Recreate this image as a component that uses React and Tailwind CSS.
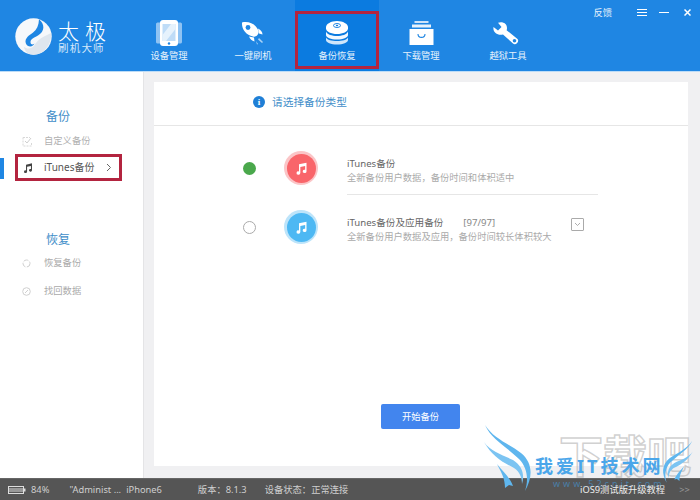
import React from "react";

const Phone = () => (
  <svg width="28" height="26" viewBox="0 0 28 26">
    <path d="M1 4c0-1 1-1.500 2-1.500h3v21H3c-1 0-2-.5-2-1.500z" fill="#8fc3f3" />
    <path d="M27 4c0-1-1-1.500-2-1.500h-3v21h3c1 0 2-.5 2-1.500z" fill="#8fc3f3" />
    <rect x="5" y="0" width="18" height="26" rx="3" fill="#fff" />
    <path d="M7.500 4h13v17h-13z" fill="#bfdcf7" />
    <path d="M16 4h4.500v5L11 21H7.500v-6z" fill="#e6f2fc" />
    <circle cx="14" cy="23.500" r="1.200" fill="#1f86e3" />
  </svg>
);
const Rocket = () => (
  <svg width="24" height="24" viewBox="0 0 24 24">
    <path d="M1 1.500C8 0 15 3 17.500 10c.5 2-.5 3.500-1.500 4.500s-2.500 1.500-4 1C5 14 .5 8 1 1.500z" fill="#fff" />
    <circle cx="7" cy="6.500" r="2.400" fill="#1f86e3" />
    <path d="M17 7.500c3 1.500 4.500 3.500 4.500 6l-3.500-1zM8 15.500c1 2.500 3 4.500 5.500 5l-.5-4z" fill="#fff" />
    <path d="M18 17l4 4-1 1-4-3.500zM15 20l2 3-1 .5z" fill="#a9d2f6" />
  </svg>
);
const Disks = () => (
  <svg width="24" height="24" viewBox="0 0 24 24">
    <path d="M1 6v1.500C1 10.500 6 13 12 13s11-2.500 11-5.500V6c0-3-5-6-11-6S1 3 1 6z" fill="#fff" />
    <ellipse cx="12" cy="4.500" rx="3.500" ry="2" fill="none" stroke="#0b7be0" strokeWidth=".9" />
    <ellipse cx="12" cy="4.500" rx="1.200" ry=".7" fill="#0b7be0" />
    <path d="M1 10.500c1 3 6 4.500 11 4.500s10-1.500 11-4.500v3.500c0 2.500-5 4.500-11 4.500S1 16.500 1 14z" fill="#f2f8fe" />
    <path d="M1 16.500c1 2.500 6 3.500 11 3.500s10-1 11-3.500V19c0 2.500-5 4.500-11 4.500S1 21.500 1 19z" fill="#cfe6fb" />
  </svg>
);
const Bag = () => (
  <svg width="25" height="24" viewBox="0 0 25 24">
    <rect x="5.500" y="0" width="14" height="2" fill="#cfe4f9" />
    <rect x="3" y="3.500" width="19" height="3" fill="#e7f2fc" />
    <path d="M.5 8h24v16H.5z" fill="#fff" />
    <path d="M9 13c0 4.500 7 4.500 7 0" fill="none" stroke="#1f86e3" strokeWidth="1.100" />
  </svg>
);
const Wrench = () => (
  <svg width="26" height="23" viewBox="0 0 26 23" className="mr-[4px]">
    <path d="M.5 5l4.500 3.500L8.500 5 5 .8C9.500-.8 14 1.500 14 6c0 .8-.1 1.500-.4 2.200L24.500 17c2.300 2.500-1.800 6.800-4.500 4.500L10 12.500C5 14 -.5 10.500.5 5z" fill="#fff" />
    <circle cx="21.500" cy="18.800" r="1.800" fill="#1f86e3" />
  </svg>
);

const NavItem = ({ label, icon, active, className = "" }) => (
  <div className={`relative w-[84px] h-[71px] flex flex-col items-center pt-[19px] ${active ? "bg-[#0b7be0]" : ""} ${className}`}>
    <div className="h-[28px] flex items-center justify-center">{icon}</div>
    <span className="text-[9.3px] leading-[12px] mt-[3px] text-[#e4f1fc]">{label}</span>
    {active && <div className="absolute left-0 right-0 top-[11px] bottom-[2px] border-[3px] border-[#b3243f]" />}
  </div>
);

const Note = ({ size = 18, color = "#fff" }) => (
  <svg width={size} height={size} viewBox="0 0 18 18">
    <path d="M6 4l9-2v10.500a2.300 2 0 1 1-1.600-1.900V6L7.600 7.300v7.200a2.300 2 0 1 1-1.600-1.900z" fill={color} />
  </svg>
);

const Radio = ({ on }) =>
  on ? (
    <div className="w-[13px] h-[13px] rounded-full bg-[#4aa84c]" />
  ) : (
    <div className="w-[13px] h-[13px] rounded-full border border-[#aaa] bg-white" />
  );

const Disc = ({ bg, ring }) => (
  <div className={`w-[34px] h-[34px] rounded-full flex items-center justify-center ${ring}`}>
    <div className={`w-[29px] h-[29px] rounded-full flex items-center justify-center ${bg}`}>
      <Note size={15} />
    </div>
  </div>
);

const Wing = ({ flip, w = 58, h = 72 }) => (
  <svg width={w} height={h} viewBox="0 0 58 72" className={flip ? "-scale-x-100" : ""}>
    <path d="M2 1c6 14 22 22 34 34 8 8 10 20 6 32 8-14 8-28-4-38C26 20 10 14 2 1z" fill="#5fb6ee" />
    <path d="M1 18c8 14 18 20 30 26 6 4 8 10 8 16 3-10 0-18-9-24C20 31 8 28 1 18z" fill="#7cc4f2" />
    <path d="M14 40c6 8 12 12 16 22l-4-1-4 3c0-10-4-16-8-24z" fill="#5fb6ee" />
  </svg>
);

export default function App() {
  return (
    <div className="relative w-[700px] h-[500px] overflow-hidden flex flex-col bg-[#f0f0f2] font-['Noto_Sans','Noto_Sans_CJK_SC',sans-serif]">
      <header className="h-[72px] shrink-0 flex bg-[#1f86e3] border-b border-[#bcdcf7] relative">
        <div className="w-[127px] pl-[15px] pt-[18px] flex items-start gap-[6px]">
          <svg width="37" height="37" viewBox="0 0 37 37" className="shrink-0">
            <circle cx="18.500" cy="18.500" r="18.200" fill="#f6f8fb" />
            <path d="M29 18.500c2-1 4-2 7.200-3.500C37 25 30 36.700 18.500 36.700c-5 0-9-3-9.500-8 3 3 7.500 2 10-1 2-3 5-7 10-9.200z" fill="#dfe6ee" />
            <path d="M24 1.200c6 5 6 12 -1 16.300-5 2.500-7.500 3.500-7.500 7 0 2.200 3 2.700 4 .8-1 4-7 4.500-8.700 0-1.500-5 3.500-8 7-10.500 4-3 6-7.500 6.200-13.600z" fill="#1f86e3" />
          </svg>
          <div className="flex flex-col text-white mt-[2px]">
            <span className="text-[21px] leading-[22px] tracking-[6px] font-light whitespace-nowrap">太极</span>
            <span className="text-[10.5px] leading-[12px] mt-[0px] text-[#d5e8fa] tracking-[1.200px] whitespace-nowrap">刷机大师</span>
          </div>
        </div>
        <nav className="flex">
          <NavItem label="设备管理" icon={<Phone />} />
          <NavItem label="一键刷机" icon={<Rocket />} />
          <NavItem label="备份恢复" icon={<Disks />} active />
          <NavItem label="下载管理" icon={<Bag />} />
          <NavItem label="越狱工具" icon={<Wrench />} className="ml-[3px]" />
        </nav>
        <div className="absolute top-[6px] right-[9px] flex items-center h-[13px] text-[#e4f1fc]">
          <span className="text-[9.3px] mr-[25px]">反馈</span>
          <div className="w-[10px] flex flex-col gap-[2px] mr-[12px]">
            <div className="h-px bg-white" /><div className="h-px bg-white" /><div className="h-px bg-white" />
          </div>
          <div className="w-[10px] h-px bg-white mr-[15px]" />
          <svg width="7" height="7" viewBox="0 0 7 7"><path d="M.5.500l6 6M6.500.500l-6 6" stroke="#fff" strokeWidth="1.500" /></svg>
        </div>
      </header>

      <div className="flex flex-1 min-h-0">
        <aside className="w-[144px] shrink-0 bg-white border-r border-[#e4e4e6] relative text-[9.3px]">
          <div className="pl-[46px] pt-[37px] text-[12px] leading-[16px] text-[#3f8ec9]">备份</div>
          <div className="flex items-center h-[14px] mt-[9px] pl-[22px] text-[#b0b0b0]">
            <svg width="11" height="11" viewBox="0 0 11 11" className="mr-[11px]">
              <path d="M1 1.500h7M1 1.500v8.500h8.500V6" fill="none" stroke="#d8d8d8" strokeDasharray="2 1" />
              <path d="M3 5l2 2 4-5" fill="none" stroke="#cfcfcf" />
            </svg>
            自定义备份
          </div>
          <div className="relative flex items-center h-[27px] mt-[6px] ml-[15px] w-[107px] border-[3px] border-[#b3243f] text-[#555]">
            <div className="absolute left-[-18px] top-[1px] w-[4px] h-[21px] bg-[#1f86e3]" />
            <span className="ml-[4px] mr-[10px] flex"><Note size={12} color="#444" /></span>
            <span className="text-[10px]">iTunes备份</span>
            <svg width="6" height="9" viewBox="0 0 6 9" className="ml-[12px]"><path d="M1 1l3.500 3.500L1 8" fill="none" stroke="#666" /></svg>
          </div>
          <div className="pl-[46px] mt-[51px] text-[12px] leading-[16px] text-[#3f8ec9]">恢复</div>
          <div className="flex items-center h-[14px] mt-[8px] pl-[22px] text-[#aaa]">
            <svg width="9" height="9" viewBox="0 0 9 9" className="mr-[13px]"><circle cx="4.500" cy="4.500" r="3.500" fill="none" stroke="#cfcfcf" strokeDasharray="5 1.500" /></svg>
            恢复备份
          </div>
          <div className="flex items-center h-[14px] mt-[14px] pl-[22px] text-[#aaa]">
            <svg width="9" height="9" viewBox="0 0 9 9" className="mr-[13px]"><circle cx="4.500" cy="4.500" r="3.800" fill="none" stroke="#cfcfcf" /><path d="M3 6l3-3" stroke="#cfcfcf" /></svg>
            找回数据
          </div>
        </aside>

        <main className="flex-1 min-w-0 pl-[10px] pr-[12px] pt-[10px] pb-[12px]">
          <div className="h-full bg-white flex flex-col">
            <div className="h-[44px] shrink-0 border-b border-[#e6e6e6] flex items-center pl-[99px] pb-[3px]">
              <div className="w-[12px] h-[12px] rounded-full bg-[#1f7fd6] flex items-center justify-center text-white text-[9px] font-bold font-['Liberation_Serif',serif] leading-none">i</div>
              <span className="ml-[7px] text-[10.7px] leading-[14px] text-[#3f8ec9]">请选择备份类型</span>
            </div>

            <div className="flex items-center h-[34px] mt-[25px] pl-[89px]">
              <Radio on />
              <div className="ml-[28px]"><Disc bg="bg-[#f9656a]" ring="bg-[#fbc5c7]" /></div>
              <div className="ml-[29px] pt-[5px] leading-[12px] text-[9.3px]">
                <div className="text-[#666] text-[9.6px]">iTunes备份</div>
                <div className="text-[#aaa] mt-[2px]">全新备份用户数据，备份时间和体积适中</div>
              </div>
            </div>
            <div className="h-px bg-[#e6e6e6] ml-[193px] w-[251px] mt-[9px]" />
            <div className="flex items-center h-[34px] mt-[15px] pl-[89px] relative">
              <Radio />
              <div className="ml-[28px]"><Disc bg="bg-[#4db8f3]" ring="bg-[#bde4fa]" /></div>
              <div className="ml-[29px] pt-[5px] leading-[12px] text-[9.3px]">
                <div className="text-[#666] text-[9.6px] flex">
                  <span>iTunes备份及应用备份</span>
                  <span className="ml-[20px] text-[#888]">[97/97]</span>
                </div>
                <div className="text-[#aaa] mt-[2px]">全新备份用户数据及应用，备份时间较长体积较大</div>
              </div>
              <div className="ml-[19px] mb-[5px] w-[13px] h-[13px] border border-[#aaa] rounded-[1px] flex items-center justify-center">
                <svg width="7" height="5" viewBox="0 0 7 5"><path d="M1 1l2.500 2.500L6 1" fill="none" stroke="#999" strokeWidth=".8" /></svg>
              </div>
            </div>

            <div className="mt-[160px] ml-[227px] w-[79px] h-[25px] rounded-[2px] bg-[#4285ee] text-white text-[9.3px] flex items-center justify-center">开始备份</div>
          </div>
        </main>
      </div>

      <footer className="h-[22px] shrink-0 bg-[#555555] border-t border-[#666] flex items-center text-[9.3px] text-[#cfcfcf] pl-[8px] whitespace-nowrap">
        <svg width="18" height="8" viewBox="0 0 18 8">
          <rect x=".5" y=".5" width="15" height="7" fill="none" stroke="#ddd" />
          <path d="M2 2v4M4 2v4M6 2v4M8 2v4M10 2v4M12 2v4M14 2v4" stroke="#ddd" />
          <rect x="16" y="2.500" width="1.500" height="3" fill="#ddd" />
        </svg>
        <span className="ml-[5px]">84%</span>
        <span className="ml-[20px]">"Administ ...</span>
        <span className="ml-[5px]">iPhone6</span>
        <span className="ml-[36px]">版本：8.1.3</span>
        <span className="ml-[18px]">设备状态：正常连接</span>
      </footer>

      <div className="absolute left-[559px] top-[428px] text-[44px] leading-[56px] font-bold text-transparent [-webkit-text-stroke:1.500px_rgba(170,170,170,0.55)] pointer-events-none whitespace-nowrap">下载吧</div>
      <div className="absolute left-[483px] top-[424px] pointer-events-none"><Wing /></div>
      <div className="absolute left-[656px] top-[440px] pointer-events-none"><Wing flip w={38} h={46} /></div>
      <div className="absolute left-[535px] top-[454px] text-[18px] leading-[24px] tracking-[3px] font-bold text-[#4aa6ea] pointer-events-none whitespace-nowrap">我爱IT技术网</div>
      <div className="absolute left-[553px] top-[477px] text-[9px] leading-[14px] tracking-[3px] text-[#4a7fa8] pointer-events-none whitespace-nowrap">www.52cnit.com</div>
      <div className="absolute left-[580px] top-[483px] text-[9.3px] leading-[14px] text-[#eeeeee] pointer-events-none whitespace-nowrap">iOS9测试版升级教程<span className="ml-[14px] text-[#999]">&gt;&gt;</span></div>
    </div>
  );
}
